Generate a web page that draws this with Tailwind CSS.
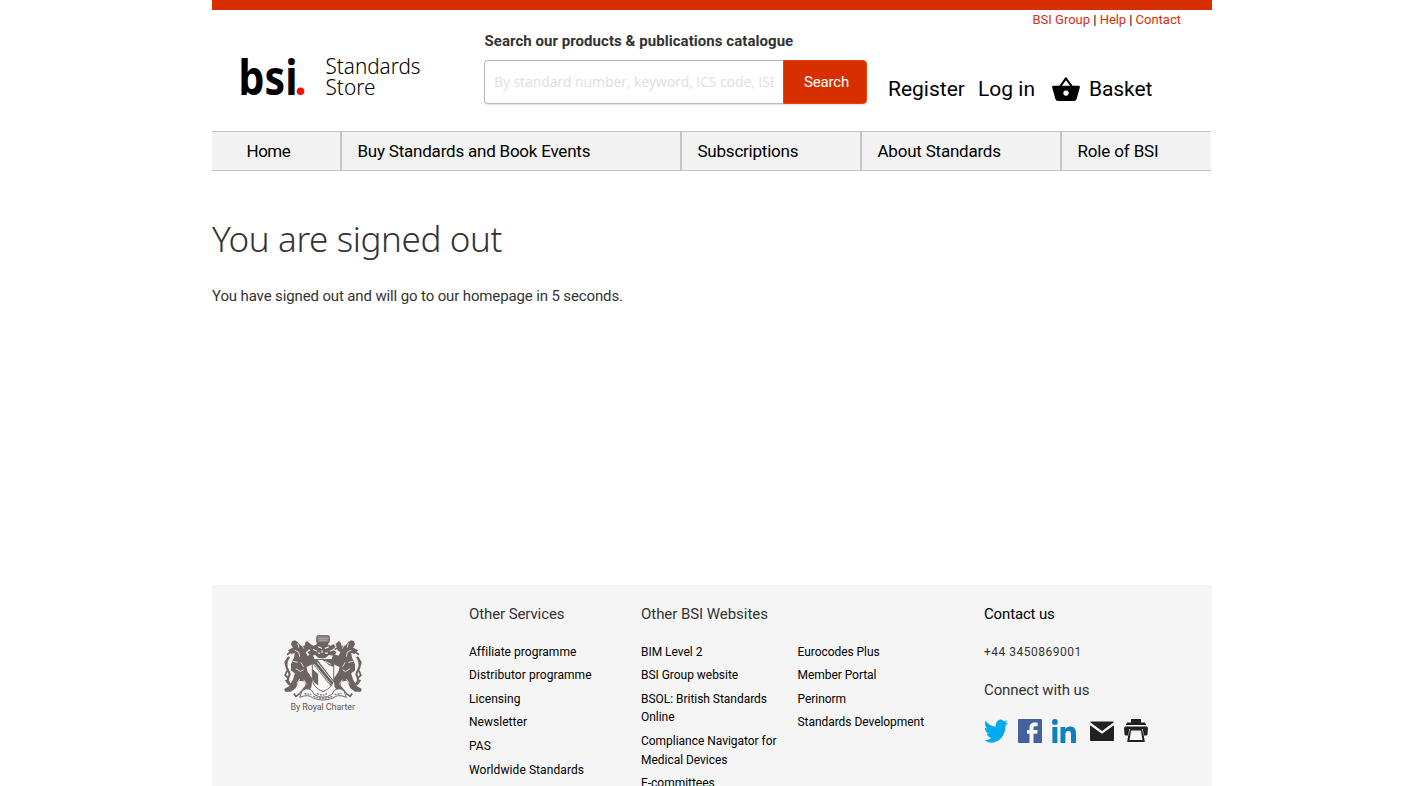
<!DOCTYPE html>
<html lang="en">
<head>
<meta charset="utf-8">
<title>BSI Standards Store</title>
<script src="https://cdn.jsdelivr.net/npm/@tailwindcss/browser@4"></script>
</head>
<body class="h-[786px] overflow-hidden bg-white font-['Roboto','Liberation_Sans',sans-serif] text-black">
<div class="ml-[212px] flex h-[786px] w-[1000px] flex-col overflow-hidden">
  <header class="h-[131px] shrink-0 border-t-10 border-[#d82f00]">
    <div class="flex">
      <svg class="mt-[40px] ml-[28px] h-[50px] w-[184px] font-['Noto_Sans',sans-serif]" viewBox="240 50 184 50" role="img">
        <text x="238.500" y="95" font-size="49" font-weight="700" textLength="59" lengthAdjust="spacingAndGlyphs">bsi</text>
        <circle cx="300.5" cy="91.3" r="3.8" fill="#ff0d05"/>
        <text x="325.5" y="73.5" font-size="22.500" font-weight="300" textLength="95" lengthAdjust="spacingAndGlyphs">Standards</text>
        <text x="325.5" y="94.5" font-size="22.500" font-weight="300" textLength="50" lengthAdjust="spacingAndGlyphs">Store</text>
      </svg>
      <div class="ml-[60px] w-[383px] pt-[21px]">
        <h2 class="pl-[0.5px] text-[15px] leading-5 font-bold tracking-[0.05px] whitespace-nowrap text-[#333]">Search our products &amp; publications catalogue</h2>
        <div class="mt-[9px] flex h-11 rounded-[4px] shadow-[0_1px_2px_#0002]">
          <div class="w-[299px] rounded-l-[4px] border border-r-0 border-[#bbb] pr-[9px] pl-[9px]">
            <div class="overflow-hidden font-['Open_Sans'] text-[14px] leading-[42px] tracking-[-0.08px] whitespace-nowrap text-[#dedede]">By standard number, keyword, ICS code, ISBN</div>
          </div>
          <button class="w-[84px] rounded-r-[4px] border border-[#e04800] bg-[#d82f00] pl-[3px] text-[15px] tracking-[-0.15px] text-white">Search</button>
        </div>
      </div>
      <div class="flex-1">
        <div class="pr-[31px] text-right text-[13px] leading-[19px] whitespace-nowrap"><a class="text-[#d82f1a]">BSI Group</a> | <a class="tracking-[-0.1px] text-[#d82f00]">Help</a> | <a class="text-[#d82f00]">Contact</a></div>
        <div class="mt-[48px] flex h-6 items-center pl-[21px] text-[21px] leading-6">
          <a class="w-[90px]">Register</a>
          <a class="w-[74px]">Log in</a>
          <svg class="mr-[9px] h-6 w-7" viewBox="0 0 28 24"><path fill-rule="evenodd" d="M14 0 20.6 8.7H26.7Q28.2 8.8 27.8 10.4L24.6 22Q24 23.9 22 24H6Q4 23.9 3.4 22L.2 10.4Q-.2 8.8 1.3 8.7H7.4L13 .8ZM14 3.2 9.9 8.7H18.1ZM14 13.4a2.7 2.7 0 1 0 .01 0Z"/></svg>
          <a class="tracking-[-0.1px]">Basket</a>
        </div>
      </div>
    </div>
  </header>
  <nav class="flex h-10 w-[999px] shrink-0 border-y border-[#c4c4c4] bg-[#f2f2f2] text-[17px] leading-[38px] tracking-[-0.22px] whitespace-nowrap">
    <a class="w-[128px] pl-[34.5px] tracking-[-0.5px]">Home</a>
    <a class="w-[340px] border-l-2 border-[#c4c4c4] pl-[15.5px]">Buy Standards and Book Events</a>
    <a class="w-[180px] border-l-2 border-[#c4c4c4] pl-[15.5px]">Subscriptions</a>
    <a class="w-[200px] border-l-2 border-[#c4c4c4] pl-[15.5px]">About Standards</a>
    <a class="flex-1 border-l-2 border-[#c4c4c4] pl-[15.5px] tracking-[-0.15px]">Role of BSI</a>
  </nav>
  <main class="flex-1 text-[#333]">
    <h1 class="mt-[48px] font-['Noto_Sans',sans-serif] text-[35px] leading-10 font-light tracking-[-0.4px]">You are signed out</h1>
    <p class="mt-[27px] text-[15px] leading-5 tracking-[-0.13px]">You have signed out and will go to our homepage in 5 seconds.</p>
  </main>
  <footer class="grid h-[201px] shrink-0 grid-cols-[257px_172px_156px_187px_228px] overflow-hidden bg-[#f5f5f5] pt-[19px] text-[12px] leading-[18.6px] whitespace-nowrap">
    <div class="pt-[30px] pl-[70px]">
      <svg class="h-[80px] w-[82px]" viewBox="282 634 82 80" fill="#6c6362">
        <g transform="matrix(.97 0 0 .92 9.700 50.500)">
        <g id="supporter">
          <path d="M310 645l-3-3-2 1-1 4-4 0-3-4-3-2-3 1-1 4 2 3-5 3 3 4 4-1-1 5-3 7 0 7 4 3-2 7-4 7-5 3 1 3 6 0 5-4 3-8 6 1 1 4-4 5-3 4 8-1 5-6 1-9-5-8-1-5 6-3 2-6-2-5-5 2-2-4 3-2z"/>
          <path d="M293 691q-7-2-6-9 3-4 0-8-4-7 1-15" fill="none" stroke="#6c6362" stroke-width="2.2"/>
          <path d="M287 660l-3 5 1 4M286 674l-2 5 3 3M288 684l-3 1 3 4M289 654l-3 3M293 699l2 3 4-3M307 649l4 2M309 664l4-3" fill="none" stroke="#6c6362" stroke-width="1.8"/>
          <path d="M294 652l4 2 1 5M295 672l5 3 3-2M296 688l3-5M301 645l2 5M292 664l5 1M300 665l3 5M297 644l1 5M303 684l3 5" fill="none" stroke="#e4e1e0" stroke-width="1"/>
        </g>
        <use href="#supporter" transform="matrix(-1 0 0 1 646 0)"/>
        <rect x="316.5" y="636" width="13" height="8" rx="1.5" fill="#8a8380" stroke="#6c6362"/>
        <path d="M318 639h10M319 641h8" stroke="#b8b3b1" stroke-width=".8"/>
        <path d="M317 643h12l-1 3 3 1 3-2 2 3-3 3 4 3-3 4-5-1-3 3-4 1-4-1-3-3-5 1-3-4 4-3-3-3 2-3 3 2 3-1z"/>
        <path d="M313 651l4 2M318 648l4 2M325 650l4-2M330 653l4-2M318 655h2M325 655h3M322 652v3" stroke="#f5f5f5" stroke-width="1.2"/>
        <path d="M312 662h22v21q0 9-11 14-11-5-11-14z" fill="#f8f8f8" stroke="#6c6362"/>
        <path d="M312 662h5l17 23-3 6-19-25zM312 672l6 6v12l-4-3-2-5zM322 662h12v8l-5-2z"/>
        <path d="M314 667l17 22M317 665l16 21M325 664l6 3" stroke="#f5f5f5" stroke-width=".9" fill="none"/>
        <path d="M301 697q3-5 10-2l3 5q9 6 18 0l3-5q7-3 10 2l2 6q-9-4-14 1-10 4-20 0-5-5-14-1z" fill="#f5f5f5" stroke="#6c6362" stroke-width="1"/>
        <path d="M304 699l7 1M313 702q10 4 20 0M335 700l7-1M317 699l5 2 6-2" stroke="#6c6362" stroke-width="1.2" stroke-dasharray="2 1" fill="none"/>
        </g>
        <text x="290.5" y="710" font-size="9" textLength="64.500" fill="#5f5856">By Royal Charter</text>
      </svg>
    </div>
    <div>
      <h3 class="mb-[18.600px] text-[15px] leading-5 tracking-[-0.1px] text-[#333]">Other Services</h3>
      <ul class="space-y-[5px] tracking-[0.03px]">
        <li>Affiliate programme</li><li class="tracking-[0.08px]">Distributor programme</li><li>Licensing</li><li>Newsletter</li><li>PAS</li><li class="tracking-[0.08px]">Worldwide Standards</li>
      </ul>
    </div>
    <div>
      <h3 class="mb-[18.600px] text-[15px] leading-5 tracking-[-0.05px] text-[#333]">Other BSI Websites</h3>
      <ul class="space-y-[5px] tracking-[-0.03px]">
        <li>BIM Level 2</li><li>BSI Group website</li><li>BSOL: British Standards<br>Online</li><li>Compliance Navigator for<br>Medical Devices</li><li>E-committees</li>
      </ul>
    </div>
    <ul class="space-y-[5px] pt-[38.600px] pl-[0.500px] tracking-[-0.05px]">
      <li>Eurocodes Plus</li><li>Member Portal</li><li>Perinorm</li><li>Standards Development</li>
    </ul>
    <div>
      <h3 class="text-[15px] leading-5 tracking-[-0.15px]">Contact us</h3>
      <p class="mt-[18.600px] tracking-[0.5px] text-[#333]">+44 3450869001</p>
      <h3 class="mt-[18.400px] text-[15px] leading-5 tracking-[-0.12px] text-[#333]">Connect with us</h3>
      <div class="mt-[19px] flex">
        <svg class="mr-[10px] size-6" viewBox="0 0 24 24" fill="#00aaec"><path d="M24 4.560a9.800 9.800 0 0 1-2.830.780 4.900 4.900 0 0 0 2.160-2.720 9.900 9.900 0 0 1-3.120 1.190 4.920 4.920 0 0 0-8.390 4.480A13.970 13.970 0 0 1 1.670 3.150a4.920 4.920 0 0 0 1.520 6.570 4.900 4.900 0 0 1-2.230-.62 4.920 4.920 0 0 0 3.950 4.890 4.900 4.900 0 0 1-2.220.080 4.930 4.930 0 0 0 4.600 3.420A9.900 9.900 0 0 1 0 19.540a13.940 13.940 0 0 0 7.550 2.210c9.140 0 14.310-7.720 13.990-14.640A10 10 0 0 0 24 4.560z" transform="matrix(1 0 0 1.180 0 -2)"/></svg>
        <svg class="mr-[10px] size-6" viewBox="0 0 24 24"><rect width="24" height="24" rx="1" fill="#45619d"/><path fill="#f5f5f5" d="M15.500 24v-9.300h3.700l.5-3.600h-4.200V9c0-1.200.4-1.700 2-1.700h2.200V3.700c-.4 0-1.500-.2-2.800-.2-3.300 0-5.400 1.700-5.400 4.900v2.700H9v3.600h2.500V24z"/></svg>
        <svg class="mr-[14px] size-6" viewBox="0 0 24 24" fill="#0d80bd"><circle cx="2.900" cy="2.900" r="2.900"/><path d="M.4 8h5v16h-5zM8.500 8h4.800v2.200c.7-1.300 2.300-2.600 4.800-2.600 5 0 5.900 3.300 5.900 7.600V24h-5v-7.800c0-1.900 0-4.200-2.600-4.200s-3 2-3 4.100V24H8.500z"/></svg>
        <svg class="mr-[10px] size-6" viewBox="0 0 24 24" fill="#212121"><path d="M1 2.500h22a1 1 0 0 1 .8.700L12 12 .2 3.200a1 1 0 0 1 .8-.7zM0 6.200l12 8.600 12-8.600V21a1 1 0 0 1-1 1H1a1 1 0 0 1-1-1z"/></svg>
        <svg class="size-6" viewBox="0 0 24 24" fill="#212121"><path fill-rule="evenodd" d="M7 0h10v3.500h4l1.200 2.500H1.800L3 3.500h4zM1 7.500h22l1 1.500-.5 6.500-1 1h-3L18 10H6l-1.500 6.500h-3l-1-1L0 9zM5.200 10h13.600l2 13H3.200zM7 11.500 5.600 21h12.800L17 11.500z"/></svg>
      </div>
    </div>
  </footer>
</div>
</body>
</html>
